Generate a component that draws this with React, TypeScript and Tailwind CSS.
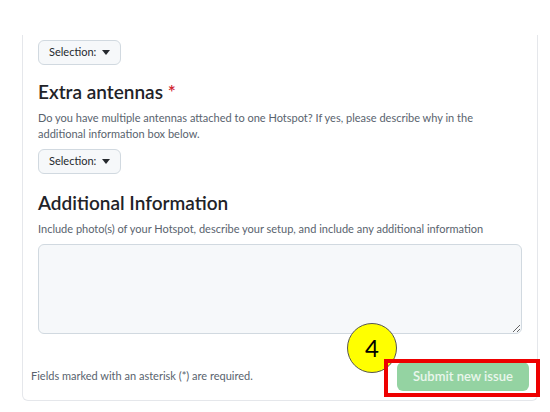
import React from 'react';

const font = { fontFamily: 'Lato, "Noto Sans", sans-serif' };

const SelectButton: React.FC = () => (
    <button
        type="button"
        className="flex h-[25px] w-[83px] items-center gap-[6px] rounded-md border border-[#d1d9e0] bg-[#f6f8fa] pl-[10px] text-[11px] text-[#25292e]"
    >
        <span>Selection:</span>
        <svg width="8" height="5" viewBox="0 0 8 5" className="fill-[#25292e]">
            <path d="M0 0h8L4 5z" />
        </svg>
    </button>
);

const App: React.FC = () => {
    return (
        <div className="relative h-[412px] w-[550px] overflow-hidden bg-white pt-[35px]" style={font}>
            <div className="ml-[22px] w-[516px] rounded-b-md border-x border-b border-[#e5e7eb]">
                <div className="px-[15px] pt-[5px]">
                    <SelectButton />

                    <h2 className="mt-[12px] text-[19px] leading-[30px] font-semibold text-[#1f2328]">
                        Extra antennas <span className="text-[#d1242f]">*</span>
                    </h2>
                    <p className="mt-[3px] text-[11px] leading-[16px] text-[#59636e]">
                        Do you have multiple antennas attached to one Hotspot? If yes, please describe why in the
                        <br />
                        additional information box below.
                    </p>
                    <div className="mt-[7px]">
                        <SelectButton />
                    </div>

                    <h2 className="mt-[14px] text-[19px] leading-[30px] font-semibold text-[#1f2328]">
                        Additional Information
                    </h2>
                    <p className="mt-[3px] text-[11px] leading-[16px] text-[#59636e]">
                        Include photo(s) of your Hotspot, describe your setup, and include any additional information
                    </p>
                    <textarea className="mt-[7px] block h-[90px] w-full rounded-md border border-[#d1d9e0] bg-[#f6f8fa]" />
                </div>

                <div className="mt-[28px] flex items-center justify-between px-2 pb-[9px]">
                    <span className="text-[11px] text-[#59636e]">Fields marked with an asterisk (*) are required.</span>
                    <button
                        type="button"
                        className="h-[29px] w-[132px] rounded-md bg-[#94d3a2] text-[13px] font-semibold text-white/80"
                    >
                        Submit new issue
                    </button>
                </div>
            </div>

            <div className="absolute left-[347px] top-[323px] flex h-[50px] w-[50px] items-center justify-center rounded-full border border-[#555] bg-[#ffff00] text-[24px] text-black">
                4
            </div>
            <div className="absolute left-[384px] top-[359px] h-[38px] w-[156px] border-4 border-[#ee0000]" />
        </div>
    );
};

export default App;
